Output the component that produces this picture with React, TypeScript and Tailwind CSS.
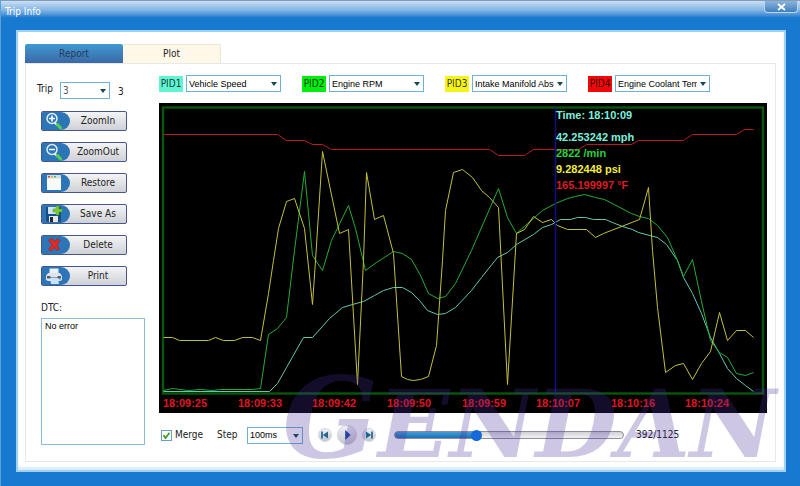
import clsx from "clsx";
import { useState } from "react";
import type { ReactNode } from "react";

const PIDS = [
	{ id: "PID1", value: "Vehicle Speed", color: "bg-[#5ff5d2]" },
	{ id: "PID2", value: "Engine RPM", color: "bg-[#00ee0c]" },
	{ id: "PID3", value: "Intake Manifold Abso", color: "bg-[#f4f41c]" },
	{ id: "PID4", value: "Engine Coolant Tem", color: "bg-[#f00808]" },
];

const SERIES = [
	{
		name: "Engine Coolant Temperature",
		color: "#b81c20",
		points:
			"4,31 118,31 127,37 145,37 153,41 163,41 172,46 330,46 339,52 365,52 374,46 419,46 427,41 472,41 479,37 524,37 533,31 577,31 585,26 594,26",
	},
	{
		name: "Vehicle Speed",
		color: "#62c8b4",
		points:
			"4,288 110,288 118,280 127,264 144,234 153,234 170,215 183,204 193,201 204,198 215,192 224,187 234,184 243,184 252,189 260,197 268,207 278,211 286,210 296,204 312,187 322,174 338,154 348,149 357,141 374,131 383,124 392,121 401,116 411,116 418,114 426,114 434,116 446,116 453,119 463,123 473,126 479,129 498,134 507,141 518,157 524,174 533,190 542,210 551,234 560,250 568,265 577,275 586,282 594,288",
	},
	{
		name: "Engine RPM",
		color: "#24ac34",
		points:
			"4,287 13,285 21,286 29,287 41,286 53,287 61,286 93,286 101,285 109,231 118,225 127,214 135,147 145,68 153,152 163,167 172,137 189,102 196,125 206,167 217,159 234,148 243,150 252,156 261,172 269,190 278,195 286,193 296,180 312,147 339,85 348,114 357,130 383,107 396,100 408,95 416,93 425,91 436,94 445,96 472,110 480,113 489,115 498,122 508,134 518,157 524,173 533,156 542,198 551,237 560,249 568,254 577,270 586,272 594,269",
	},
	{
		name: "Intake Manifold Absolute Pressure",
		color: "#c4c03c",
		points:
			"4,234 13,234 20,237 49,237 56,234 64,237 75,237 83,234 93,234 101,237 109,190 114,157 119,125 127,98 135,95 145,125 153,201 156,157 163,48 180,130 189,126 198,281 204,157 207,69 215,116 224,112 234,150 242,273 248,276 254,277 261,276 269,273 277,242 283,157 286,107 294,69 303,66 313,74 322,87 330,94 339,104 348,281 357,130 365,126 374,113 383,119 392,116 398,122 408,126 427,126 436,134 444,130 480,116 489,84 493,147 498,204 506,269 516,262 524,260 533,276 542,260 551,248 560,209 568,237 577,227 586,227 594,234",
	},
];

const TICKS = [
	{ x: 4, label: "18:09:25" },
	{ x: 79, label: "18:09:33" },
	{ x: 153, label: "18:09:42" },
	{ x: 228, label: "18:09:50" },
	{ x: 303, label: "18:09:59" },
	{ x: 377, label: "18:10:07" },
	{ x: 452, label: "18:10:16" },
	{ x: 526, label: "18:10:24" },
];

const READOUTS = [
	{ y: 16, color: "#7cf0dc", label: "Time: 18:10:09" },
	{ y: 38, color: "#7cf0dc", label: "42.253242 mph" },
	{ y: 54, color: "#28d23c", label: "2822 /min" },
	{ y: 70, color: "#f2ee3a", label: "9.282448 psi" },
	{ y: 86, color: "#dc1c20", label: "165.199997 °F" },
];

const ACTIONS = [
	{ label: "ZoomIn", icon: <MagnifierIcon plus /> },
	{ label: "ZoomOut", icon: <MagnifierIcon /> },
	{ label: "Restore", icon: <WindowIcon /> },
	{ label: "Save As", icon: <SaveIcon /> },
	{ label: "Delete", icon: <DeleteIcon /> },
	{ label: "Print", icon: <PrinterIcon /> },
];

export default function App() {
	return (
		<div className="relative flex min-h-screen flex-col overflow-hidden border-l border-[#5e9fd4] bg-[#1779cf] font-['DejaVu_Sans_Condensed','DejaVu_Sans',sans-serif] text-[10px] leading-4 text-[#222]">
			<TitleBar />
			<main className="mt-2 mr-3.5 mb-3.5 ml-[15px] flex grow flex-col border-2 border-[#9fd2f2] bg-white pt-3 pr-2 pb-2 pl-[7px] shadow-[inset_0_-3px_2px_#dcebf7]">
				<Tabs />
				<div className="flex grow border border-[#e8e8e8] bg-white pt-[11px] pr-2 pb-4">
					<Sidebar />
					<PlotPanel />
				</div>
			</main>
			<div className="pointer-events-none absolute right-6 bottom-3 flex items-baseline font-['DejaVu_Serif',serif] text-[94px] leading-[100px] font-bold text-[#4b2f9a]/27 italic">
				<span className="text-[112px]">G</span>
				<span>ENDAN</span>
			</div>
		</div>
	);
}

function TitleBar() {
	return (
		<header className="flex h-[22px] items-start justify-between border-t border-[#7d9db8] bg-linear-to-b from-[#cbdff3] via-[#7fb3e4] via-45% to-[#1779cf] to-80% pl-1 text-white">
			<h1 className="pt-[3px]">Trip Info</h1>
			<button
				type="button"
				aria-label="Close"
				className="mr-0.5 flex h-3 w-[34px] items-center justify-center rounded-b border border-t-0 border-[#b8d6f0] bg-linear-to-b from-[#8db4d8] to-[#3d7fbd]"
			>
				<svg width="9" height="8" viewBox="0 0 9 8" aria-hidden="true">
					<path d="M1 1l7 6M8 1l-7 6" stroke="#fff" strokeWidth="1.8" />
				</svg>
			</button>
		</header>
	);
}

function Tabs() {
	return (
		<div role="tablist" className="flex h-[19px]">
			<button
				type="button"
				role="tab"
				aria-selected="false"
				className="w-[98px] rounded-t-xs bg-linear-to-b from-[#3f9ad2] to-[#3a68a6] text-[#273c58]"
			>
				Report
			</button>
			<button
				type="button"
				role="tab"
				aria-selected="true"
				className="w-[98px] rounded-tr-xs border border-b-0 border-l-0 border-[#eee6d4] bg-[#fdf8e8]"
			>
				Plot
			</button>
		</div>
	);
}

function Sidebar() {
	return (
		<aside className="flex w-[133px] shrink-0 flex-col pt-[7px] pr-3.5 pl-[15px]">
			<div className="-ml-1 flex h-[17px] items-center">
				<label htmlFor="trip" className="w-[23px] pb-1">
					Trip
				</label>
				<Dropdown id="trip" className="w-[50px] text-[#555]" value="3" plain />
				<span className="pt-0.5 pl-2">3</span>
			</div>
			<div className="mt-3 flex flex-col gap-[11px]">
				{ACTIONS.map((action) => (
					<ActionButton key={action.label} icon={action.icon}>
						{action.label}
					</ActionButton>
				))}
			</div>
			<label htmlFor="dtc" className="mt-3.5">
				DTC:
			</label>
			<textarea
				id="dtc"
				readOnly
				defaultValue="No error"
				className="mt-0.5 min-h-[126px] w-[104px] grow resize-none border border-[#8cbbd8] px-[3px] font-['Liberation_Sans',sans-serif] text-[9px] leading-3.5 text-black"
			/>
		</aside>
	);
}

function ActionButton({
	icon,
	children,
}: {
	icon: ReactNode;
	children: ReactNode;
}) {
	return (
		<button
			type="button"
			className="flex h-5 w-[86px] items-stretch overflow-hidden rounded-xs border border-[#46578f] bg-linear-to-b from-[#f4f4f6] to-[#cfd1d6]"
		>
			<span className="flex w-7 items-center rounded-r-[10px] bg-[#2c76b8] pl-0.5">
				{icon}
			</span>
			<span className="grow self-center text-center">{children}</span>
		</button>
	);
}

function Dropdown({
	id,
	value,
	label,
	className,
	plain = false,
}: {
	id: string;
	value: string;
	label?: string;
	className?: string;
	plain?: boolean;
}) {
	return (
		<div className={clsx("relative h-[17px]", className)}>
			<select
				id={id}
				aria-label={label}
				className={clsx(
					"block h-full w-full appearance-none overflow-hidden border border-[#6fb1d4] bg-white pr-3 pl-0.5 leading-3.5 whitespace-nowrap",
					!plain &&
						"font-['Liberation_Sans',sans-serif] text-[9px] text-black",
				)}
			>
				<option>{value}</option>
			</select>
			<svg
				width="6"
				height="4"
				viewBox="0 0 6 4"
				aria-hidden="true"
				className="pointer-events-none absolute top-[7px] right-1"
			>
				<path d="M0 0h6L3 4z" fill="#124a50" />
			</svg>
		</div>
	);
}

function PlotPanel() {
	return (
		<section className="flex min-w-0 grow flex-col">
			<div className="flex gap-[21px]">
				{PIDS.map((pid) => (
					<div key={pid.id} className="flex items-center gap-[3px]">
						<label
							htmlFor={pid.id}
							className={clsx("w-6 text-center text-black/80", pid.color)}
						>
							{pid.id}
						</label>
						<Dropdown id={pid.id} value={pid.value} className="w-[95px]" />
					</div>
				))}
			</div>
			<Chart />
			<Playback />
		</section>
	);
}

function Chart() {
	return (
		<svg
			viewBox="0 0 608 310"
			role="img"
			aria-label="Trip plot"
			className="mt-[11px] w-full bg-black font-['Liberation_Sans',sans-serif] text-[11px] font-bold"
		>
			<rect
				x="4"
				y="4.5"
				width="600"
				height="286"
				fill="none"
				stroke="#07560c"
				strokeWidth="2.4"
			/>
			{SERIES.map((series) => (
				<polyline
					key={series.name}
					points={series.points}
					transform="translate(0.5 0.5)"
					fill="none"
					stroke={series.color}
				/>
			))}
			<path d="M396.5 5v285" stroke="#101080" strokeWidth="1.6" />
			{READOUTS.map((readout) => (
				<text key={readout.label} x="397" y={readout.y} fill={readout.color}>
					{readout.label}
				</text>
			))}
			{TICKS.map((tick) => (
				<text key={tick.label} x={tick.x} y="304" fill="#e01420">
					{tick.label}
				</text>
			))}
		</svg>
	);
}

function Playback() {
	const total = 1125;
	const [position, setPosition] = useState(392);
	const percent = (position / total) * 100;

	return (
		<div className="mt-3 flex items-center pl-0.5">
			<label className="flex items-center gap-[3px]">
				<span className="relative flex size-[11px]">
					<input
						type="checkbox"
						defaultChecked
						className="peer size-[11px] appearance-none border border-[#6a9fc4] bg-white"
					/>
					<svg
						viewBox="0 0 11 11"
						aria-hidden="true"
						className="pointer-events-none invisible absolute inset-0 peer-checked:visible"
					>
						<path
							d="M2.5 5.2l2 2.8 4-5.2"
							fill="none"
							stroke="#3d9a1c"
							strokeWidth="1.7"
						/>
					</svg>
				</span>
				Merge
			</label>
			<label htmlFor="step" className="ml-3.5 w-[30px]">
				Step
			</label>
			<Dropdown id="step" value="100ms" className="w-14" />
			<div className="ml-[15px] flex items-center gap-[5px]">
				<RoundButton label="Previous">
					<path d="M6.5 6v8" stroke="#1d6795" strokeWidth="2" />
					<path d="M13.5 6v8L7.5 10z" fill="#1d6795" />
				</RoundButton>
				<RoundButton label="Play" large>
					<path d="M8 4.5l6 5.5-6 5.5z" fill="#1746a8" />
				</RoundButton>
				<RoundButton label="Next">
					<path d="M13.5 6v8" stroke="#1d6795" strokeWidth="2" />
					<path d="M6.5 6v8l6-4z" fill="#1d6795" />
				</RoundButton>
			</div>
			<input
				type="range"
				aria-label="Position"
				min={0}
				max={total}
				value={position}
				onChange={(e) => setPosition(Number(e.target.value))}
				className="ml-[18px] h-2 w-[230px] appearance-none rounded-sm border border-[#8e8e9c] [&::-webkit-slider-thumb]:size-[11px] [&::-webkit-slider-thumb]:appearance-none [&::-webkit-slider-thumb]:rounded-full [&::-webkit-slider-thumb]:bg-[#1468d8]"
				style={{
					background: `linear-gradient(#3fa0da, #1f6fb4) 0 0 / ${percent}% 100% no-repeat, linear-gradient(#d2d2d6, #f2f2f4)`,
				}}
			/>
			<output className="ml-3">
				{position}/{total}
			</output>
		</div>
	);
}

function RoundButton({
	label,
	large = false,
	children,
}: {
	label: string;
	large?: boolean;
	children: ReactNode;
}) {
	return (
		<button
			type="button"
			aria-label={label}
			className={clsx(
				"rounded-full border border-[#d4d4dc] bg-linear-to-b from-[#f0f0f4] to-[#c4c6d0]",
				large ? "size-5" : "size-3.5",
			)}
		>
			<svg
				viewBox={large ? "0 0 20 20" : "3 3 14 14"}
				aria-hidden="true"
				className="size-full"
			>
				{children}
			</svg>
		</button>
	);
}

function MagnifierIcon({ plus = false }: { plus?: boolean }) {
	return (
		<svg width="19" height="18" viewBox="0 0 19 18" aria-hidden="true">
			<path d="M10.5 10.5l3 3" stroke="#dfe9f2" strokeWidth="2" />
			<path
				d="M13.5 12.5l3 3.5"
				stroke="#52d04a"
				strokeWidth="3"
				strokeLinecap="round"
			/>
			<circle
				cx="8"
				cy="6.5"
				r="5"
				fill="#2c76b8"
				stroke="#e4eef6"
				strokeWidth="1.5"
			/>
			<path
				d={plus ? "M5 6.5h6M8 3.5v6" : "M5 6.5h6"}
				stroke="#fff"
				strokeWidth="1.6"
			/>
		</svg>
	);
}

function WindowIcon() {
	return (
		<svg width="19" height="18" viewBox="0 0 19 18" aria-hidden="true">
			<path d="M3 1h14v15H3z" fill="#f8fafc" />
			<path d="M3 1h14v3.5H3z" fill="#d8dce0" />
			<path d="M4 2h2v1.5H4z" fill="#d8483c" />
			<path d="M7 2h2v1.5H7z" fill="#d8b03c" />
			<path d="M10 2h2v1.5h-2z" fill="#6cae50" />
		</svg>
	);
}

function SaveIcon() {
	return (
		<svg width="19" height="18" viewBox="0 0 19 18" aria-hidden="true">
			<path d="M2 2h14l1 1v14H3l-1-1z" fill="#164e84" />
			<path d="M4 2h9v7H4z" fill="#cfe2f2" />
			<path d="M5 11h9v6H5z" fill="#e4e6ea" />
			<path d="M6 12h3v5H6z" fill="#1c2c3c" />
			<path
				d="M12 1h3v3h3v3h-3v3h-3V7H9V4h3z"
				fill="#7ccb32"
				stroke="#509a20"
				strokeWidth="0.5"
			/>
		</svg>
	);
}

function DeleteIcon() {
	return (
		<svg width="19" height="18" viewBox="0 0 19 18" aria-hidden="true">
			<path
				d="M4.5 4L8 2.500l2.500 3L14 2.500l2 2L13 9l2.500 4.500-2.500 1-2.500-3L7 15l-2.500-1.500L8 9z"
				fill="#dc2c24"
				stroke="#a41c1c"
				strokeWidth="0.6"
			/>
		</svg>
	);
}

function PrinterIcon() {
	return (
		<svg width="19" height="18" viewBox="0 0 19 18" aria-hidden="true">
			<path d="M5.500 1.500h9v6h-9z" fill="#e8f0f8" />
			<path d="M4 6h12l2 3v4l-2 1H4l-2-1V9z" fill="#e0e3e8" />
			<path d="M3 9h3l1 1.500h6L14 9h3v2.500H3z" fill="#50606e" />
			<path d="M6 11h8l1 6H7z" fill="#c4e2fa" />
			<circle cx="16" cy="12" r="0.8" fill="#4a90c8" />
		</svg>
	);
}
